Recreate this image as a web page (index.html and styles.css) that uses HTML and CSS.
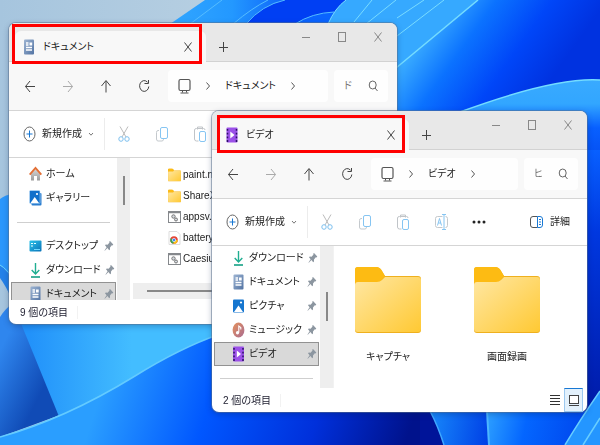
FILE: index.html
```html
<!DOCTYPE html>
<html lang="ja">
<head>
<meta charset="utf-8">
<meta name="viewport" content="width=device-width, initial-scale=1">
<title>エクスプローラー</title>
<link rel="stylesheet" href="styles.css">
</head>
<body>
<svg class="defs" aria-hidden="true">
  <defs>
    <linearGradient id="gDoc" x1="0" y1="0" x2="1" y2="1"><stop offset="0" stop-color="#9db4d2"/><stop offset="1" stop-color="#5273a3"/></linearGradient>
    <linearGradient id="gFold" x1="0" y1="0" x2="1" y2="1"><stop offset="0" stop-color="#ffe7a3"/><stop offset="1" stop-color="#ffc933"/></linearGradient>
    <linearGradient id="gDesk" x1="0" y1="0" x2="1" y2="1"><stop offset="0" stop-color="#2bc4ea"/><stop offset="1" stop-color="#0a72b8"/></linearGradient>
    <linearGradient id="gMus" x1="0" y1="0" x2="1" y2="1"><stop offset="0" stop-color="#e5925c"/><stop offset="1" stop-color="#a96b91"/></linearGradient>
    <linearGradient id="gHome" x1="0" y1="0" x2="0" y2="1"><stop offset="0" stop-color="#d6d6d6"/><stop offset="1" stop-color="#9c9c9c"/></linearGradient>
  </defs>
  <symbol id="doc" viewBox="0 0 12 16"><rect x="1" y=".5" width="10" height="15" rx="1" fill="url(#gDoc)"/><path d="M3 4h2.500M3 6h2.500M3 8.500h6M3 11h6" stroke="#fff" stroke-width="1.300"/><path d="M6.500 3.500h2.700v3H6.500z" fill="#fff"/></symbol>
  <symbol id="video" viewBox="0 0 12 16"><rect x=".5" y=".5" width="11" height="15" rx="1" fill="#9b51e8"/><path d="M1.500 2v13M10.500 2v13" stroke="#2c1166" stroke-width="1.500" stroke-dasharray="1.800 1.900"/><path d="M4.300 4.500 8.500 8l-4.200 3.500z" fill="#fff"/></symbol>
  <symbol id="down" viewBox="0 0 12 16"><path d="M6 1v10.500M2.200 8 6 12l3.800-4" fill="none" stroke="#1fae91" stroke-width="1.400"/><path d="M1.500 15h9" stroke="#14a085" stroke-width="1.600"/></symbol>
  <symbol id="picture" viewBox="0 0 12 16"><rect x=".5" y="1.500" width="11" height="13" rx="1" fill="#1676cf"/><path d="M1.500 14 6 7.500l4.500 6.500z" fill="#fff"/><circle cx="8.500" cy="4.500" r="1.100" fill="#fff"/></symbol>
  <symbol id="gallery" viewBox="0 0 13 16"><rect x="2.500" y="3" width="10" height="12.500" rx="1" fill="#2c7fd0"/><rect x=".5" y=".5" width="10.500" height="13" rx="1" fill="#1270cb" stroke="#cfe8ff" stroke-width=".5"/><path d="M1.500 13 5.700 7l4.300 6z" fill="#fff"/><circle cx="8" cy="4" r="1.100" fill="#fff"/></symbol>
  <symbol id="music" viewBox="0 0 12 16"><ellipse cx="6" cy="8" rx="5.900" ry="7.600" fill="url(#gMus)"/><path d="M6.300 10.500V4l2 1.500v2" fill="none" stroke="#fff" stroke-width="1.100"/><ellipse cx="5" cy="10.800" rx="1.600" ry="1.800" fill="#fff"/></symbol>
  <symbol id="home" viewBox="0 0 13 16"><path d="M2 8v6.500h3V10h3v4.500h3V8L6.500 3z" fill="url(#gHome)"/><path d="M.7 8.700 6.500 2l5.800 6.700" fill="none" stroke="#e36f35" stroke-width="1.900"/></symbol>
  <symbol id="desktop" viewBox="0 0 13 16"><rect x=".5" y="2.500" width="12" height="11" rx="1" fill="url(#gDesk)"/><path d="M2 5.500h2M5 5.500h2M2 8h2" stroke="#eaffff" stroke-width="1.200"/><path d="M5 11.500h6" stroke="#6fd9ff"/></symbol>
  <symbol id="pin" viewBox="0 0 10 12"><path d="M6 1 9.300 4.500 8.500 5.500 7.800 5.300 6 7.500 6 9.500 5.200 10.200 3.400 8 .8 10.800 .5 10.400 2.600 7.200 1 5.300 1.800 4.600 3.600 4.700 5.500 2.500 5.200 1.700z" fill="#8c96a0"/></symbol>
  <symbol id="folder" viewBox="0 0 68 68"><path d="M1 4q0-3 3-3h18q4 0 6 4l3 5h33q3 0 3 3v51q0 3-3 3H4q-3 0-3-3z" fill="#efb01e"/><path d="M1 4q0-3 3-3h18q4 0 6 4l3 5-6 7H1z" fill="#fdbb13"/><path d="M1 19q0-3 3-3h19q3 0 5-2l3-3h33q3 0 3 3v49q0 3-3 3H4q-3 0-3-3z" fill="url(#gFold)"/></symbol>
  <symbol id="batch" viewBox="0 0 13 14"><rect x=".5" y="1.500" width="12" height="11" fill="#fff" stroke="#85888c"/><path d="M1 2.500h11" stroke="#85888c" stroke-width="1.500"/><circle cx="5.500" cy="6.500" r="1.700" fill="#d5dae0" stroke="#777"/><circle cx="8" cy="9.500" r="1.500" fill="#d5dae0" stroke="#777"/></symbol>
  <symbol id="chromefile" viewBox="0 0 13 14"><path d="M1 .5h8l3 3v10H1z" fill="#fff" stroke="#ddd"/><circle cx="6" cy="9" r="3.800" fill="#e64434"/><path d="M6 9 2.700 7.200A3.800 3.800 0 0 0 5.500 12.800z" fill="#34a853"/><path d="M6 9h3.800A3.800 3.800 0 0 1 5.500 12.800z" fill="#fbc116"/><circle cx="6" cy="9" r="1.700" fill="#4285f4" stroke="#fff" stroke-width=".6"/></symbol>
  <symbol id="x" viewBox="0 0 10 12"><path d="M1.500 1.500 8.500 10.500M8.500 1.500l-7 9" stroke="currentColor" fill="none"/></symbol>
  <symbol id="plus" viewBox="0 0 10 12"><path d="M5.500 1v10M1 6.500h9" stroke="currentColor"/></symbol>
  <symbol id="min" viewBox="0 0 10 12"><path d="M1 6.500h8" stroke="currentColor"/></symbol>
  <symbol id="max" viewBox="0 0 10 12"><rect x="1.500" y="1.500" width="7" height="9" fill="none" stroke="currentColor"/></symbol>
  <symbol id="back" viewBox="0 0 12 14"><path d="M11 7.500H1.500M6 2 1.500 7.500 6 13" fill="none" stroke="currentColor"/></symbol>
  <symbol id="fwd" viewBox="0 0 12 14"><path d="M1 7.500h9.500M6 2l4.500 5.500L6 13" fill="none" stroke="currentColor"/></symbol>
  <symbol id="up" viewBox="0 0 12 14"><path d="M6 13.500V2M1.500 7 6 1.500 10.500 7" fill="none" stroke="currentColor"/></symbol>
  <symbol id="reload" viewBox="0 0 12 14"><path d="M9.500 3.200A4.600 5.400 0 1 0 10.800 7.500M6.500 4.500h4V1" fill="none" stroke="currentColor"/></symbol>
  <symbol id="pc" viewBox="0 0 13 16"><rect x="1" y="1.500" width="11" height="11" rx="1.500" fill="none" stroke="currentColor" stroke-width="1.200"/><path d="M4.500 12.500v2M8.500 12.500v2M2.500 15h8" stroke="currentColor"/></symbol>
  <symbol id="chev" viewBox="0 0 6 10"><path d="M1.500 1.500 4.500 5l-3 3.500" fill="none" stroke="currentColor"/></symbol>
  <symbol id="chevd" viewBox="0 0 6 6"><path d="M1 2l2 2.200L5 2" fill="none" stroke="currentColor"/></symbol>
  <symbol id="search" viewBox="0 0 10 12"><ellipse cx="4.700" cy="5" rx="3.500" ry="4" fill="none" stroke="currentColor"/><path d="M7 8l2.500 3" stroke="currentColor"/></symbol>
  <symbol id="new" viewBox="0 0 13 16"><ellipse cx="6.500" cy="8" rx="5.500" ry="7" fill="none" stroke="#666"/><path d="M6.500 4.500v7M3.500 8h6" stroke="#1677d2"/></symbol>
  <symbol id="cut" viewBox="0 0 12 16"><path d="M2 .5l6 10.500M10 .5 4 11" stroke="#bbb"/><ellipse cx="3" cy="13" rx="2.200" ry="2.300" fill="none" stroke="#7cbfee"/><ellipse cx="9" cy="13" rx="2.200" ry="2.300" fill="none" stroke="#7cbfee"/></symbol>
  <symbol id="copy" viewBox="0 0 12 16"><path d="M3 4.500H2q-1.500 0-1.500 2V13q0 2 1.500 2h4q1.500 0 1.500-2" fill="none" stroke="#c4c9cd"/><rect x="4.500" y="1.500" width="7" height="11" rx="1.500" fill="none" stroke="#86c5f2"/></symbol>
  <symbol id="paste" viewBox="0 0 12 16"><path d="M4.500 15h-2Q.5 15 .5 13V4Q.5 2.500 2.500 2.500h7Q11 2.500 11 4M3.500 3.500V1h5v2.500" fill="none" stroke="#c0c4c8"/><rect x="5.500" y="5.500" width="6" height="10" rx="1.500" fill="#fff" stroke="#86c5f2"/></symbol>
  <symbol id="rename" viewBox="0 0 13 16"><path d="M7.500 2.500h-5q-2 0-2 2v7q0 2 2 2h5M10.500 2.500q2 0 2 2v7q0 2-2 2" fill="none" stroke="#c4c9cd"/><path d="M7 .5h4M7 15.500h4M9 .5v15M2.500 11.500l2-7 2 7M3.300 9h2.600" fill="none" stroke="#86c5f2"/></symbol>
  <symbol id="dots" viewBox="0 0 14 4"><ellipse cx="2" cy="2" rx="1.500" ry="1.500" fill="#222"/><ellipse cx="7" cy="2" rx="1.500" ry="1.500" fill="#222"/><ellipse cx="12" cy="2" rx="1.500" ry="1.500" fill="#222"/></symbol>
  <symbol id="details" viewBox="0 0 13 14"><path d="M7.500 1.500H3Q.5 1.500 .5 4v6q0 2.500 2.500 2.500h4.500" fill="none" stroke="#555"/><path d="M7.500 1.500H10q2.500 0 2.500 2.500v6q0 2.500-2.500 2.500H7.500zM9 4.500h2M9 7h2M9 9.500h2" fill="none" stroke="#1878d4"/></symbol>
  <symbol id="list" viewBox="0 0 10 13"><path d="M0 1.500h10M0 4.500h10M0 7.500h10M0 10.500h10" stroke="#333"/></symbol>
  <symbol id="large" viewBox="0 0 10 13"><rect x=".5" y="1.500" width="9" height="8" fill="#fff" stroke="#444"/><path d="M0 11.500h10" stroke="#444"/></symbol>
</svg>

<svg class="wallpaper" viewBox="0 0 600 445" preserveAspectRatio="xMidYMid slice" aria-hidden="true">
  <defs>
    <linearGradient id="sky" x1="0" y1="0" x2="1" y2="0"><stop offset="0" stop-color="#a6c5de"/><stop offset=".4" stop-color="#b8d0e2"/></linearGradient>
    <linearGradient id="petals" x1="0" y1="0" x2="1" y2="0"><stop offset="0" stop-color="#31a6ff"/><stop offset=".25" stop-color="#2398ff"/><stop offset=".5" stop-color="#0a5cf8"/><stop offset="1" stop-color="#2ba2ff"/></linearGradient>
    <linearGradient id="big" gradientUnits="userSpaceOnUse" x1="435" y1="20" x2="540" y2="95"><stop offset="0" stop-color="#38aaff"/><stop offset=".3" stop-color="#0b72ff"/><stop offset=".65" stop-color="#0046f8"/><stop offset="1" stop-color="#0032e0"/></linearGradient>
    <linearGradient id="right" x1="0" y1="0" x2="0" y2="1"><stop offset="0" stop-color="#39aaff"/><stop offset=".2" stop-color="#32a6ff"/><stop offset=".4" stop-color="#0860ff"/><stop offset="1" stop-color="#0038e0"/></linearGradient>
    <linearGradient id="edge" x1="0" y1="0" x2="0" y2="1"><stop offset="0" stop-color="#0860ff"/><stop offset=".3" stop-color="#0038e0"/><stop offset="1" stop-color="#0019a5"/></linearGradient>
    <linearGradient id="mid" gradientUnits="userSpaceOnUse" x1="30" y1="330" x2="200" y2="330"><stop offset="0" stop-color="#2292fa"/><stop offset=".6" stop-color="#43bdff"/></linearGradient>
    <linearGradient id="shade" gradientUnits="userSpaceOnUse" x1="0" y1="350" x2="50" y2="375"><stop offset="0" stop-color="#2f86ee"/><stop offset="1" stop-color="#104bb6"/></linearGradient>
    <linearGradient id="low" gradientUnits="userSpaceOnUse" x1="110" y1="365" x2="400" y2="460"><stop offset="0" stop-color="#2a9eff"/><stop offset=".35" stop-color="#0057ff"/><stop offset=".7" stop-color="#0030db"/><stop offset="1" stop-color="#00128c"/></linearGradient>
    <linearGradient id="foot" gradientUnits="userSpaceOnUse" x1="430" y1="420" x2="490" y2="430"><stop offset="0" stop-color="#1787fa"/><stop offset="1" stop-color="#0040e6"/></linearGradient>
    <linearGradient id="foot2" gradientUnits="userSpaceOnUse" x1="488" y1="420" x2="580" y2="440"><stop offset="0" stop-color="#2a9cff"/><stop offset=".4" stop-color="#0466ff"/><stop offset="1" stop-color="#0048ee"/></linearGradient>
  </defs>
  <rect width="600" height="445" fill="url(#sky)"/>
  <path d="M0 199Q5 195 12 194V284Q8 270 0 265z" fill="#2b97fc"/>
  <path d="M0 265Q8 270 14 285L12 300Q6 286 0 278z" fill="#2481e8"/><path d="M0 265Q7 269 14 280" fill="none" stroke="#69d5ff"/>
  <path d="M0 317Q5 309 12 304L30 323 60 415 0 437z" fill="url(#shade)"/>
  <path d="M205 0 170 24V60H420V0z" fill="url(#petals)"/>
  <path d="M246 24Q262 5 285 0H395L340 24z" fill="#003ff3"/><path d="M295 24Q312 13 334 12V24z" fill="#0a64ff"/>
  <path d="M246 24Q262 5 285 0M295 24Q312 13 334 12M190 24 222 0M233 24Q252 8 268 0" fill="none" stroke="#55bdff"/>
  <path d="M328 24Q335 8 346 0H480L390 75V24z" fill="#36a9ff"/>
  <path d="M328 24Q335 8 346 0M354 22 372 0M366 24 396 0M397 36 444 0M397 18 424 0" fill="none" stroke="#79dcff"/>
  <path d="M390 73 478 0H600V180H390z" fill="url(#big)"/><path d="M390 73 478 0" stroke="#74dcff" stroke-width="1.500"/>
  <path d="M460 112Q555 77 600 80V200H460z" fill="url(#right)"/><path d="M460 112Q555 77 600 80" fill="none" stroke="#74dcff" stroke-width="1.500"/>
  <path d="M20 321H220V345L150 405 60 419z" fill="url(#mid)"/>
  <path d="M0 437Q65 419 135 376 180 348 220 334V300H600V445H0z" fill="url(#low)"/><path d="M0 437Q65 419 135 376 180 348 220 334" fill="none" stroke="#63cbff" stroke-width="1.500"/>
  <path d="M580 250H600V445H420V405H580z" fill="#001499"/>
  <path d="M580 150H600V420H580z" fill="url(#edge)"/>
  <path d="M430 411H488V445H444Q438 426 430 411z" fill="url(#foot)"/><path d="M430 411Q438 426 444 445" fill="none" stroke="#3fa8ff" stroke-width="1.500"/>
  <path d="M487 411H590L568 445H489z" fill="url(#foot2)"/><path d="M487 411 489 445" stroke="#4cb5ff" stroke-width="2"/>
  <path d="M565 445Q580 420 600 391V445z" fill="#2496ff"/><path d="M565 445Q580 420 600 391M583 445 600 418" fill="none" stroke="#68ceff" stroke-width="1.500"/>
</svg>

<main class="screen">
  <section class="window window-docs" aria-label="ドキュメント">
    <header class="titlebar">
      <div class="tab"><svg class="i-file"><use href="#doc"/></svg><span class="tab-name">ドキュメント</span><button class="icon-btn" aria-label="タブを閉じる"><svg class="i-s"><use href="#x"/></svg></button></div>
      <button class="icon-btn add" aria-label="新しいタブ"><svg class="i-s"><use href="#plus"/></svg></button>
      <div class="caption"><button class="icon-btn" aria-label="最小化"><svg class="i-s"><use href="#min"/></svg></button><button class="icon-btn" aria-label="最大化"><svg class="i-s"><use href="#max"/></svg></button><button class="icon-btn" aria-label="閉じる"><svg class="i-s"><use href="#x"/></svg></button></div>
    </header>
    <div class="navbar">
      <button class="icon-btn nav" aria-label="戻る"><svg class="i-n"><use href="#back"/></svg></button>
      <button class="icon-btn nav off" aria-label="進む"><svg class="i-n"><use href="#fwd"/></svg></button>
      <button class="icon-btn nav" aria-label="上へ"><svg class="i-n"><use href="#up"/></svg></button>
      <button class="icon-btn nav" aria-label="更新"><svg class="i-n"><use href="#reload"/></svg></button>
      <div class="address"><svg class="i-l"><use href="#pc"/></svg><svg class="i-c"><use href="#chev"/></svg><a class="crumb" href="#docs">ドキュメント</a><svg class="i-c"><use href="#chev"/></svg></div>
      <label class="search"><input type="text" placeholder="ド" aria-label="検索"><svg class="i-s"><use href="#search"/></svg></label>
    </div>
    <div class="toolbar">
      <button class="new"><svg class="i-l"><use href="#new"/></svg>新規作成<svg class="i-d"><use href="#chevd"/></svg></button>
      <button class="icon-btn tool" aria-label="切り取り"><svg class="i-t"><use href="#cut"/></svg></button>
      <button class="icon-btn tool" aria-label="コピー"><svg class="i-t"><use href="#copy"/></svg></button>
      <button class="icon-btn tool" aria-label="貼り付け"><svg class="i-t"><use href="#paste"/></svg></button>
    </div>
    <div class="body">
      <nav class="side">
        <a class="item" href="#home"><svg class="i-l"><use href="#home"/></svg><span>ホーム</span></a>
        <a class="item" href="#gallery"><svg class="i-l"><use href="#gallery"/></svg><span>ギャラリー</span></a>
        <hr>
        <a class="item" href="#desktop"><svg class="i-l"><use href="#desktop"/></svg><span>デスクトップ</span><svg class="i-p"><use href="#pin"/></svg></a>
        <a class="item" href="#downloads"><svg class="i-l"><use href="#down"/></svg><span>ダウンロード</span><svg class="i-p"><use href="#pin"/></svg></a>
        <a class="item selected" href="#docs"><svg class="i-l"><use href="#doc"/></svg><span>ドキュメント</span><svg class="i-p"><use href="#pin"/></svg></a>
      </nav>
      <div class="scroll"><div class="thumb"></div></div>
      <div class="content">
        <ul class="files">
          <li><svg class="i-f"><use href="#folder"/></svg>paint.net</li>
          <li><svg class="i-f"><use href="#folder"/></svg>ShareX</li>
          <li><svg class="i-f"><use href="#batch"/></svg>appsv.bat</li>
          <li><svg class="i-f"><use href="#chromefile"/></svg>battery</li>
          <li><svg class="i-f"><use href="#batch"/></svg>Caesium</li>
        </ul>
        <div class="hscroll"><div class="hthumb"></div></div>
      </div>
    </div>
    <footer class="status"><span class="count">9 個の項目</span></footer>
    <div class="marker"></div>
  </section>

  <section class="window window-video" aria-label="ビデオ">
    <header class="titlebar">
      <div class="tab"><svg class="i-file"><use href="#video"/></svg><span class="tab-name">ビデオ</span><button class="icon-btn" aria-label="タブを閉じる"><svg class="i-s"><use href="#x"/></svg></button></div>
      <button class="icon-btn add" aria-label="新しいタブ"><svg class="i-s"><use href="#plus"/></svg></button>
      <div class="caption"><button class="icon-btn" aria-label="最小化"><svg class="i-s"><use href="#min"/></svg></button><button class="icon-btn" aria-label="最大化"><svg class="i-s"><use href="#max"/></svg></button><button class="icon-btn" aria-label="閉じる"><svg class="i-s"><use href="#x"/></svg></button></div>
    </header>
    <div class="navbar">
      <button class="icon-btn nav" aria-label="戻る"><svg class="i-n"><use href="#back"/></svg></button>
      <button class="icon-btn nav off" aria-label="進む"><svg class="i-n"><use href="#fwd"/></svg></button>
      <button class="icon-btn nav" aria-label="上へ"><svg class="i-n"><use href="#up"/></svg></button>
      <button class="icon-btn nav" aria-label="更新"><svg class="i-n"><use href="#reload"/></svg></button>
      <div class="address"><svg class="i-l"><use href="#pc"/></svg><svg class="i-c"><use href="#chev"/></svg><a class="crumb" href="#video">ビデオ</a><svg class="i-c"><use href="#chev"/></svg></div>
      <label class="search"><input type="text" placeholder="ヒ" aria-label="検索"><svg class="i-s"><use href="#search"/></svg></label>
    </div>
    <div class="toolbar">
      <button class="new"><svg class="i-l"><use href="#new"/></svg>新規作成<svg class="i-d"><use href="#chevd"/></svg></button>
      <button class="icon-btn tool" aria-label="切り取り"><svg class="i-t"><use href="#cut"/></svg></button>
      <button class="icon-btn tool" aria-label="コピー"><svg class="i-t"><use href="#copy"/></svg></button>
      <button class="icon-btn tool" aria-label="貼り付け"><svg class="i-t"><use href="#paste"/></svg></button>
      <button class="icon-btn tool" aria-label="名前の変更"><svg class="i-l"><use href="#rename"/></svg></button>
      <button class="icon-btn tool" aria-label="もっと見る"><svg class="i-m"><use href="#dots"/></svg></button>
      <button class="details"><svg class="i-f"><use href="#details"/></svg>詳細</button>
    </div>
    <div class="body">
      <nav class="side">
        <a class="item" href="#downloads"><svg class="i-l"><use href="#down"/></svg><span>ダウンロード</span><svg class="i-p"><use href="#pin"/></svg></a>
        <a class="item" href="#docs"><svg class="i-l"><use href="#doc"/></svg><span>ドキュメント</span><svg class="i-p"><use href="#pin"/></svg></a>
        <a class="item" href="#pictures"><svg class="i-l"><use href="#picture"/></svg><span>ピクチャ</span><svg class="i-p"><use href="#pin"/></svg></a>
        <a class="item" href="#music"><svg class="i-l"><use href="#music"/></svg><span>ミュージック</span><svg class="i-p"><use href="#pin"/></svg></a>
        <a class="item selected" href="#video"><svg class="i-l"><use href="#video"/></svg><span>ビデオ</span><svg class="i-p"><use href="#pin"/></svg></a>
        <hr>
      </nav>
      <div class="scroll"><div class="thumb"></div></div>
      <div class="content icons">
        <figure><svg class="i-folder"><use href="#folder"/></svg><figcaption>キャプチャ</figcaption></figure>
        <figure><svg class="i-folder"><use href="#folder"/></svg><figcaption>画面録画</figcaption></figure>
      </div>
    </div>
    <footer class="status"><span class="count">2 個の項目</span><button class="icon-btn view" aria-label="詳細表示"><svg class="i-v"><use href="#list"/></svg></button><button class="icon-btn view on" aria-label="大アイコン"><svg class="i-v"><use href="#large"/></svg></button></footer>
    <div class="marker"></div>
  </section>
</main>
</body>
</html>
```
FILE: styles.css
```css
* { box-sizing: border-box; }

body {
  margin: 0;
  overflow: hidden;
  font: 10px/16px "Liberation Sans", "Noto Sans CJK JP", sans-serif;
  font-feature-settings: "palt";
  color: #1c1c1c;
}

svg { display: block; flex: none; }
.defs { position: absolute; width: 0; height: 0; }
.wallpaper { position: fixed; inset: 0; width: 100%; height: 100%; }
.screen { position: relative; min-height: 100vh; }

button, input { font: inherit; font-feature-settings: inherit; color: inherit; border: 0; padding: 0; background: none; }
a { color: inherit; text-decoration: none; }
.icon-btn { display: flex; align-items: center; justify-content: center; }

.i-file, .i-t { width: 12px; height: 16px; }
.i-l { width: 13px; height: 16px; }
.i-s { width: 10px; height: 12px; }
.i-n { width: 12px; height: 14px; }
.i-c { width: 6px; height: 10px; }
.i-d { width: 6px; height: 6px; }
.i-p { width: 10px; height: 12px; }
.i-f { width: 13px; height: 14px; }
.i-m { width: 14px; height: 4px; }
.i-v { width: 10px; height: 13px; }
.i-folder { width: 68px; height: 68px; }

/* Windows */
.window {
  position: absolute;
  background: #fff;
  border-radius: 7px;
  box-shadow: 0 0 0 1px #5b718e80, 0 2px 6px #00205050;
}
.window-docs { left: 9px; top: 23px; right: 203px; }
.window-video { left: 212px; top: 111px; right: 13px; }

.marker { position: absolute; border: 3px solid #f00; pointer-events: none; }
.window-docs .marker { left: 3px; top: 1px; width: 190px; height: 40px; }
.window-video .marker { left: 5px; top: 4px; width: 188px; height: 38px; }

/* Title bar */
.titlebar {
  display: flex;
  height: 39px;
  padding-left: 6px;
  background: #e8e8e8;
  border-radius: 7px 7px 0 0;
  box-shadow: inset 0 -1px #d2d2d2;
}
.tab {
  display: flex;
  align-items: center;
  gap: 8px;
  width: 191px;
  margin-top: 8px;
  padding: 0 13px 0 8px;
  border-radius: 6px 6px 0 0;
  background: #f8f8f8;
}
.tab-name { flex: 1; }
.tab .icon-btn { color: #444; }
.add { width: 34px; margin-top: 8px; color: #444; }
.caption { display: flex; gap: 26px; margin-left: auto; padding: 8px 14px 0 0; color: #888; align-items: flex-start; }

/* Navigation */
.navbar {
  display: flex;
  align-items: center;
  height: 49px;
  padding: 0 9px 0 2px;
  background: #f8f8f8;
  border-bottom: 1px solid #d5d5d5;
  color: #444;
}
.nav { width: 38px; }
.nav.off { color: #aaa; }
.address {
  display: flex;
  align-items: center;
  flex: 1;
  height: 32px;
  gap: 14px;
  margin: 0 6px 0 5px;
  padding-left: 10px;
  border-radius: 4px;
  background: #fefefe;
  color: #555;
}
.crumb { color: #222; }
.search {
  display: flex;
  align-items: center;
  justify-content: flex-end;
  gap: 14px;
  width: 54px;
  height: 32px;
  padding-right: 10px;
  border-radius: 4px;
  background: #fefefe;
  color: #666;
}
.search input { width: 10px; }
.search input::placeholder { color: #777; opacity: 1; }

/* Commands */
.toolbar {
  display: flex;
  align-items: center;
  height: 47px;
  padding: 0 17px 0 14px;
  border-bottom: 1px solid #d5d5d5;
}
.new { display: flex; align-items: center; gap: 6px; width: 82px; height: 32px; border-right: 1px solid #ececec; white-space: nowrap; }
.new .i-d { color: #777; }
.tool { width: 38px; }
.details { display: flex; align-items: center; gap: 7px; margin-left: auto; white-space: nowrap; }

/* Body */
.body { display: flex; height: 142px; overflow: hidden; }
.side { flex: none; width: 108px; }
.item {
  display: flex;
  align-items: center;
  gap: 4px;
  height: 24px;
  margin: 0 1px 0 2px;
  padding: 0 2px 0 18px;
  line-height: 12px;
  white-space: nowrap;
}
.item .i-p { margin-left: auto; }
.item.selected { background: #d9d9d9; border: 1px solid #929292; padding: 0 1px 0 17px; }
.side hr { height: 1px; margin: 12px 7px 11px 8px; border: 0; background: #cfcfcf; }
.window-docs .side { padding-top: 4px; }
.scroll { display: flex; flex: none; width: 13px; justify-content: center; background: #eee; }
.thumb { width: 2px; height: 29px; background: #888; }
.window-docs .thumb { margin-top: 18px; }
.window-video .thumb { margin-top: 46px; }
.content { flex: 1; min-width: 0; }

.files { margin: 0; padding: 6px 0 0 29px; list-style: none; }
.files li { display: flex; align-items: center; gap: 2px; height: 21px; white-space: nowrap; }
.files { padding-left: 38px; }
.hscroll { height: 16px; margin: 14px 0 0 3px; padding: 7px 14px; background: #eee; }
.hthumb { height: 2px; background: #888; }

.icons { display: flex; gap: 51px; padding: 20px 0 0 20px; border-left: 1px solid #f2f2f2; }
.icons figure { display: flex; flex-direction: column; align-items: center; gap: 15px; width: 68px; margin: 0; }

/* Status */
.status { display: flex; align-items: center; height: 24px; padding: 0 4px 0 11px; color: #223; }
.count { margin-right: auto; padding-right: 9px; border-right: 1px solid #f2f2f2; line-height: 13px; }
.view { width: 19px; height: 24px; }
.view.on { border: 1px solid #9cc8ef; border-top-color: #1878d4; background: #e3f1fc; }
```
